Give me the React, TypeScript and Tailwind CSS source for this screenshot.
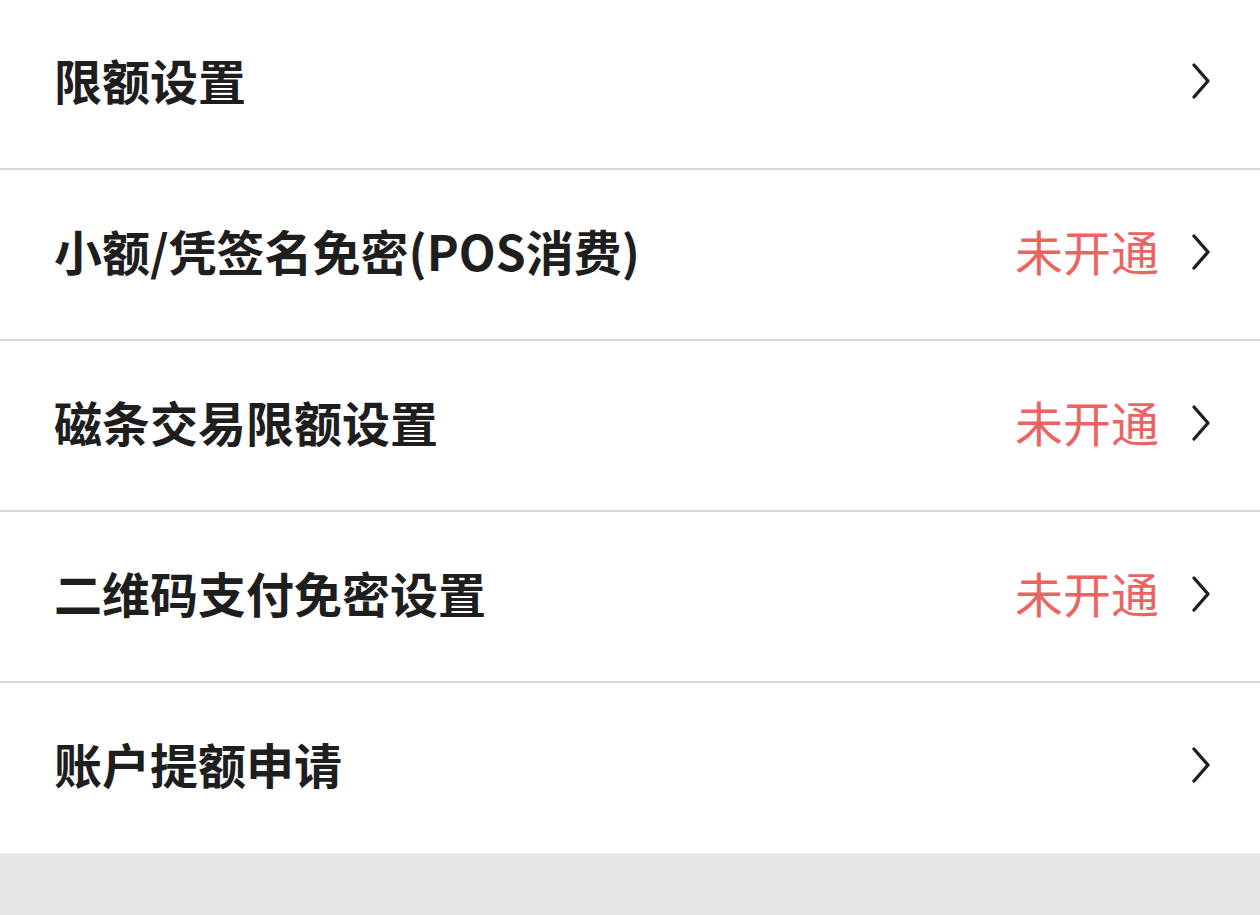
import React from "react";

const rows: { label: string; status?: string }[] = [
  { label: "限额设置" },
  { label: "小额/凭签名免密(POS消费)", status: "未开通" },
  { label: "磁条交易限额设置", status: "未开通" },
  { label: "二维码支付免密设置", status: "未开通" },
  { label: "账户提额申请" },
];

function Chevron() {
  return (
    <svg width="20" height="38" viewBox="0 0 20 38" className="shrink-0 mt-[4px]">
      <path d="M3 3 L17 19 L3 35" fill="none" stroke="#1f1f1f" strokeWidth="3.4" strokeLinecap="round" strokeLinejoin="round" />
    </svg>
  );
}

export default function App() {
  return (
    <div
      className="w-[1260px] h-[915px] bg-[#e5e6ea] flex flex-col"
      style={{ fontFamily: '"Noto Sans CJK SC", "Noto Sans", sans-serif' }}
    >
      <div className="bg-white flex flex-col">
        {rows.map((r, i) => (
          <div
            key={i}
            className={`flex items-center pl-[54px] pr-[49px] pb-[10px] ${
              i === 0 ? "h-[170px]" : i === rows.length - 1 ? "h-[170px]" : "h-[171px]"
            } ${i < rows.length - 1 ? "border-b-2 border-[#d7d7d7]" : ""}`}
          >
            <span className="text-[48px] font-bold text-[#1e1e1e] leading-none">
              {r.label}
            </span>
            <div className="flex-1" />
            {r.status && (
              <span className="text-[48px] text-[#ec6462] leading-none mr-[32px]">{r.status}</span>
            )}
            <Chevron />
          </div>
        ))}
      </div>
    </div>
  );
}
